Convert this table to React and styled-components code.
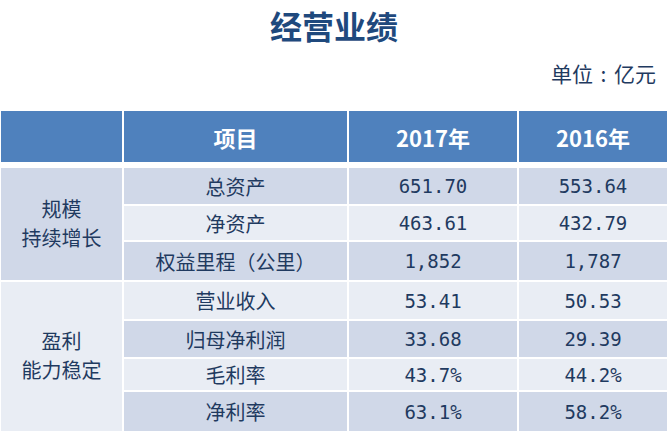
import React from 'react';
import styled, { createGlobalStyle } from 'styled-components';

const GlobalStyle = createGlobalStyle`
  body {
    margin: 0;
    background: #ffffff;
    font-family: "Noto Sans CJK SC", "Noto Sans", sans-serif;
  }
`;

const Page = styled.div`
  width: 668px;
  height: 431px;
  overflow: hidden;
  display: flex;
  flex-direction: column;
`;

const Title = styled.h1`
  margin: 5px 0 0;
  height: 40px;
  line-height: 40px;
  text-align: center;
  font-size: 32px;
  font-weight: 700;
  color: #1f497d;
`;

const Unit = styled.div`
  margin-top: 15px;
  height: 26px;
  line-height: 26px;
  padding-right: 12px;
  text-align: right;
  font-size: 21px;
  color: #1f3a60;
`;

const Colon = styled.span`
  display: inline-block;
  width: 21px;
  text-align: center;
`;

const Grid = styled.div`
  display: grid;
  grid-template-columns: 121px 223px 168px 148px;
  column-gap: 2px;
  row-gap: 2px;
  margin-left: 1px;
`;

const HeadGrid = styled(Grid)`
  margin-top: 25px;
  grid-template-rows: 51px;
`;

const BodyGrid = styled(Grid)`
  margin-top: 6px;
  grid-template-rows: 36px 34px 38px 37px 36px 31px 39px;
`;

const HeadCell = styled.div`
  background: #4f81bd;
  color: #ffffff;
  font-size: 22px;
  font-weight: 700;
  display: flex;
  align-items: center;
  justify-content: center;
`;

const Cell = styled.div`
  background: ${(p) => (p.$dark ? '#d0d8e8' : '#e9edf4')};
  color: #1f3a60;
  font-size: 20px;
  display: flex;
  align-items: center;
  justify-content: center;
  text-align: center;
`;

const Num = styled(Cell)`
  font-family: "DejaVu Sans Mono", "Liberation Mono", monospace;
  font-size: 19px;
`;

const Group = styled(Cell)`
  grid-column: 1;
  grid-row: ${(p) => p.$rows};
  padding-bottom: 3px;
`;

const GroupText = styled.div`
  font-size: 20px;
  line-height: 29px;
`;

const groups = [
  { lines: ['规模', '持续增长'], rows: '1 / span 3', dark: true },
  { lines: ['盈利', '能力稳定'], rows: '4 / span 4', dark: false },
];

const rows = [
  ['总资产', '651.70', '553.64'],
  ['净资产', '463.61', '432.79'],
  ['权益里程（公里）', '1,852', '1,787'],
  ['营业收入', '53.41', '50.53'],
  ['归母净利润', '33.68', '29.39'],
  ['毛利率', '43.7%', '44.2%'],
  ['净利率', '63.1%', '58.2%'],
];

export default function App() {
  return (
    <Page>
      <GlobalStyle />
      <Title>经营业绩</Title>
      <Unit>
        单位<Colon>:</Colon>亿元
      </Unit>
      <HeadGrid>
        <HeadCell />
        <HeadCell>项目</HeadCell>
        <HeadCell>2017年</HeadCell>
        <HeadCell>2016年</HeadCell>
      </HeadGrid>
      <BodyGrid>
        {groups.map((g) => (
          <Group key={g.rows} $rows={g.rows} $dark={g.dark}>
            <GroupText>
              {g.lines[0]}
              <br />
              {g.lines[1]}
            </GroupText>
          </Group>
        ))}
        {rows.map((r, i) => (
          <React.Fragment key={r[0]}>
            <Cell $dark={i % 2 === 0} style={{ gridRow: i + 1, gridColumn: 2 }}>
              {r[0]}
            </Cell>
            <Num $dark={i % 2 === 0} style={{ gridRow: i + 1, gridColumn: 3 }}>
              {r[1]}
            </Num>
            <Num $dark={i % 2 === 0} style={{ gridRow: i + 1, gridColumn: 4 }}>
              {r[2]}
            </Num>
          </React.Fragment>
        ))}
      </BodyGrid>
    </Page>
  );
}
